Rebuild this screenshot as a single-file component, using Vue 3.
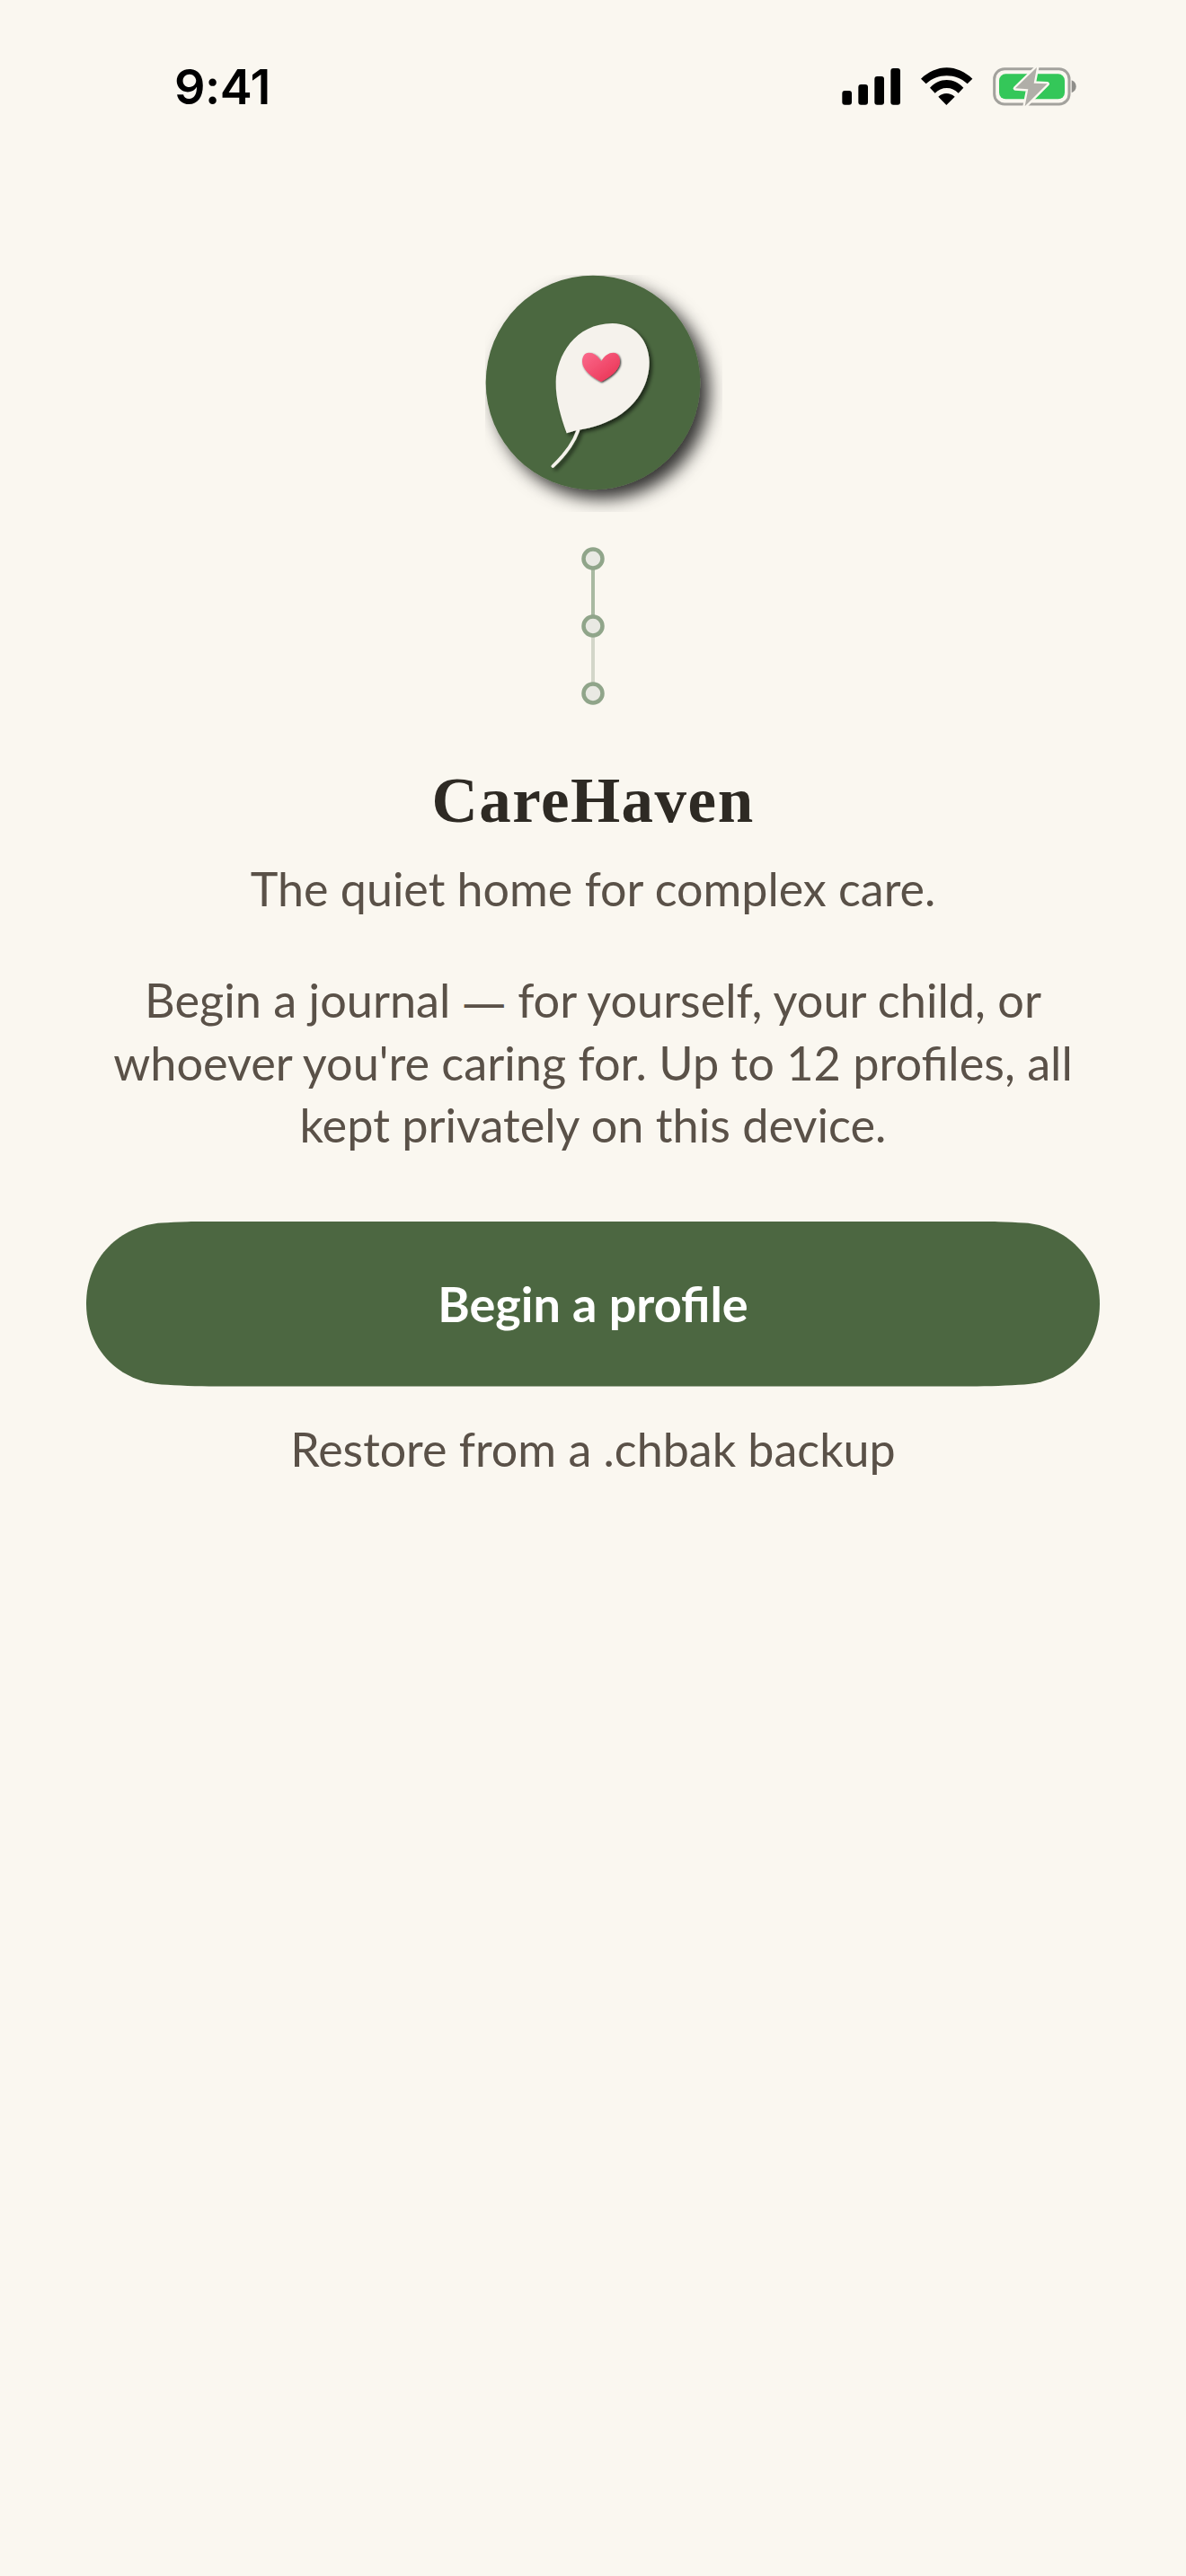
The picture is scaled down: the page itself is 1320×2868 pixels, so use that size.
<script setup>
</script>

<template>
  <div class="screen">
    <div class="status-bar">
      <span class="time">9:41</span>
      <svg class="status-icons" width="320" height="90" viewBox="0 0 960 270" aria-hidden="true">
        <rect x="112" y="153" width="32" height="47" rx="9" fill="#000" />
        <rect x="166" y="132" width="32" height="68" rx="9" fill="#000" />
        <rect x="220" y="105" width="32" height="95" rx="9" fill="#000" />
        <rect x="274" y="78" width="32" height="122" rx="9" fill="#000" />
        <path d="M375 113 C400 90 430 76 461 76 C492 76 522 90 547 113 L530 130 C510 112 487 103 461 103 C435 103 412 112 392 130Z" fill="#000" />
        <path d="M405 143 C420 127 440 117 461 117 C482 117 502 127 517 143 L500 161 C489 150 476 144 461 144 C446 144 433 150 422 161Z" fill="#000" />
        <path d="M433 173 C441 166 450 162 460 162 C470 162 480 166 488 173 L460 201Z" fill="#000" />
        <rect x="620" y="80" width="250" height="118" rx="34" fill="none" stroke="#a3a29d" stroke-width="9" />
        <rect x="636" y="97" width="219" height="84" rx="22" fill="#34c759" />
        <path d="M878 118 C888 122 893 130 893 139 C893 148 888 156 878 160Z" fill="#8f8e8a" />
        <path d="M762 75 L690 145 L733 148 L722 205 L797 130 L752 128Z" fill="#b0aea8" stroke="#faf7f0" stroke-width="14" stroke-linejoin="round" paint-order="stroke" />
      </svg>
    </div>

    <main class="content">
      <svg class="logo" width="264" height="264" viewBox="120 78 792 792" aria-hidden="true">
        <defs>
          <filter id="discShadow" x="-15%" y="-15%" width="140%" height="140%">
            <feDropShadow dx="30" dy="30" stdDeviation="28" flood-color="#000" flood-opacity="0.8" />
          </filter>
          <filter id="leafShadow" x="-20%" y="-20%" width="140%" height="140%">
            <feDropShadow dx="9" dy="9" stdDeviation="7" flood-color="#000" flood-opacity="0.6" />
          </filter>
          <filter id="heartShadow" x="-20%" y="-20%" width="140%" height="140%">
            <feDropShadow dx="3" dy="3" stdDeviation="2.5" flood-color="#000" flood-opacity="0.85" />
          </filter>
          <linearGradient id="heartFill" x1="0" y1="0" x2="1" y2="1">
            <stop offset="0" stop-color="#fb6a8c" />
            <stop offset="1" stop-color="#e92f50" />
          </linearGradient>
        </defs>
        <circle cx="480" cy="438" r="358" fill="#4c6741" filter="url(#discShadow)" />
        <g filter="url(#leafShadow)">
          <path d="M392 607 C372 550 355 495 356 435 C358 350 420 240 545 240 C620 240 668 300 668 370 C668 440 630 505 575 542 C530 573 480 588 428 597 C412 600 402 604 392 607Z" fill="#f5f2ec" />
          <path d="M430 598 C415 640 385 680 346 717" fill="none" stroke="#f5f2ec" stroke-width="11" stroke-linecap="round" />
        </g>
        <path d="M507 367 C496 348 482 338 466 338 C452 338 444 350 444 368 C444 395 478 420 507 435 C536 420 570 395 570 368 C570 350 562 338 548 338 C532 338 518 348 507 367Z" fill="url(#heartFill)" filter="url(#heartShadow)" />
      </svg>

      <svg class="thread" width="32" height="182" viewBox="0 0 32 182" aria-hidden="true">
        <line x1="16" y1="16" x2="16" y2="91" stroke="#a9b9a2" stroke-width="4" />
        <line x1="16" y1="91" x2="16" y2="166" stroke="#d3d6c9" stroke-width="4" />
        <circle cx="16" cy="16" r="10.5" fill="#e9e9e3" stroke="#90a58a" stroke-width="4.5" />
        <circle cx="16" cy="91" r="10.5" fill="#e9e9e3" stroke="#90a58a" stroke-width="4.5" />
        <circle cx="16" cy="166" r="10.5" fill="#e9e9e3" stroke="#90a58a" stroke-width="4.5" />
      </svg>

      <h1 class="title">CareHaven</h1>
      <p class="tagline">The quiet home for complex care.</p>
      <p class="intro">
        <span class="intro-line">Begin a journal <span class="dash">—</span> for yourself, your child, or</span>
        <span class="intro-line">whoever you're caring for. Up to 12 profiles, all</span>
        <span class="intro-line">kept privately on this device.</span>
      </p>

      <button class="begin" type="button">Begin a profile</button>
      <a class="restore">Restore from a .chbak backup</a>
    </main>
  </div>
</template>

<style scoped>
.screen {
  width: 1320px;
  height: 2868px;
  background: #faf7f0;
  overflow: hidden;
  font-family: "Lato", "Noto Sans", sans-serif;
  color: #5a5148;
}

.status-bar {
  display: flex;
  justify-content: space-between;
  align-items: flex-start;
  height: 94px;
  padding: 50px 100px 0 194px;
}

.time {
  font-family: "Inter", sans-serif;
  font-size: 54px;
  line-height: 94px;
  font-weight: 600;
  color: #000;
  letter-spacing: -0.5px;
}

.content {
  display: flex;
  flex-direction: column;
  align-items: center;
  padding-top: 162px;
}

.logo {
  display: block;
  margin-left: 24px;
}

.thread {
  display: block;
  margin-top: 36px;
}

.title {
  margin: 58px 0 0;
  font-family: "Liberation Serif", serif;
  font-size: 71px;
  line-height: 90px;
  font-weight: 700;
  color: #2e2a24;
  letter-spacing: 1.5px;
}

.tagline {
  margin: 18px 0 0;
  font-size: 52px;
  line-height: 70px;
}

.intro {
  margin: 54px 0 0;
  font-size: 52.25px;
  line-height: 69.5px;
  text-align: center;
}

.intro-line {
  display: block;
}

.dash {
  font-family: "Noto Sans", sans-serif;
  font-size: 48px;
  line-height: 0;
}

.begin {
  width: 1128px;
  height: 184px;
  margin-top: 73px;
  border: 0;
  background: #4c6741;
  color: #fff;
  font-family: inherit;
  font-size: 54px;
  font-weight: 700;
  clip-path: path("M0 92 C0 40 38 5 84 2 C100 1 125 0 144 0 L984 0 C1003 0 1028 1 1044 2 C1090 5 1128 40 1128 92 C1128 144 1090 179 1044 182 C1028 183 1003 184 984 184 L144 184 C125 184 100 183 84 182 C38 179 0 144 0 92Z");
}

.restore {
  margin-top: 34px;
  font-size: 52px;
  line-height: 70px;
}
</style>

<style>
html,
body {
  background: #faf7f0;
}
</style>
